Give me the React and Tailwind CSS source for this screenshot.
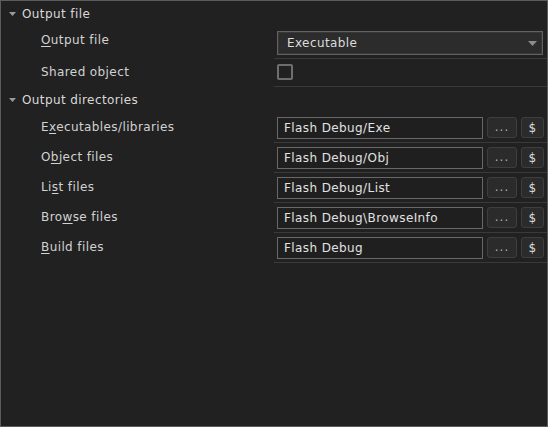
const font = { fontFamily: '"DejaVu Sans", Tahoma, sans-serif' };

const Mn = ({ text, at }) => {
  if (at < 0) return text;
  return (
    <>
      {text.slice(0, at)}
      <span className="underline underline-offset-2">{text[at]}</span>
      {text.slice(at + 1)}
    </>
  );
};

const Caret = () => (
  <svg width="9" height="5" viewBox="0 0 9 5" className="shrink-0">
    <path d="M0 0 H9 L4.5 5 Z" fill="#8c8c8c" />
  </svg>
);

const Header = ({ title, h }) => (
  <div className={`flex items-center ${h}`}>
    <div className="w-[21px] flex justify-center pl-[1px] pb-[1px]">
      <svg width="7" height="4" viewBox="0 0 7 4">
        <path d="M0 0 H7 L3.5 4 Z" fill="#9a9a9a" />
      </svg>
    </div>
    <span className="text-[#d8d8d8] pb-[1px]">{title}</span>
  </div>
);

const Row = ({ label, at, h, pad = "pb-[3px]", children }) => (
  <div className={`flex ${h}`}>
    <div className={`w-[273px] shrink-0 flex items-center pl-[40px] ${pad} text-[#d2d2d2]`}>
      <span>
        <Mn text={label} at={at} />
      </span>
    </div>
    <div className="flex-1 flex items-center pl-[3px] pr-[3px] border-b border-[#3a3a3a]">
      {children}
    </div>
  </div>
);

const dirs = [
  ["Executables/libraries", 1, "Flash Debug/Exe"],
  ["Object files", 1, "Flash Debug/Obj"],
  ["List files", 2, "Flash Debug/List"],
  ["Browse files", 3, "Flash Debug\\BrowseInfo"],
  ["Build files", 0, "Flash Debug"],
];

export default function App() {
  return (
    <div
      style={font}
      className="w-[548px] h-[427px] bg-[#212121] border border-[#5c5c5c] text-[12px] tracking-[0.4px] leading-none overflow-hidden"
    >
      <Header title="Output file" h="h-[27px]" />
      <Row label="Output file" at={0} h="h-[31px]" pad="pb-[8px]">
        <div className="flex-1 h-[24px] border border-[#626262] bg-[#2c2c2c] shadow-[inset_0_0_0_1px_#383838] flex items-center pl-[9px] pr-[5px] mr-[1px]">
          <span className="flex-1 text-[#dcdcdc]">Executable</span>
          <Caret />
        </div>
      </Row>
      <Row label="Shared object" at={-1} h="h-[28px]">
        <div className="w-[16px] h-[16px] border-2 border-[#6e6e6e] rounded-[2px] mb-[1px]" />
      </Row>
      <Header title="Output directories" h="h-[26px]" />
      {dirs.map(([label, at, value]) => (
        <Row key={label} label={label} at={at} h="h-[30px]">
          <div className="w-[206px] h-[22px] border border-[#686868] bg-[#1f1f1f] flex items-center pl-[6px] text-[#e2e2e2]">
            {value}
          </div>
          <button className="ml-[4px] w-[30px] h-[21px] rounded-[3px] bg-[#2b2b2b] border border-[#3e3e3e] text-[#b0b0b0] flex items-end justify-center pb-[4px] tracking-[1px]">
            ...
          </button>
          <button className="ml-[4px] w-[23px] h-[21px] rounded-[3px] bg-[#2b2b2b] border border-[#3e3e3e] text-[#dcdcdc] flex items-center justify-center">
            $
          </button>
        </Row>
      ))}
    </div>
  );
}
